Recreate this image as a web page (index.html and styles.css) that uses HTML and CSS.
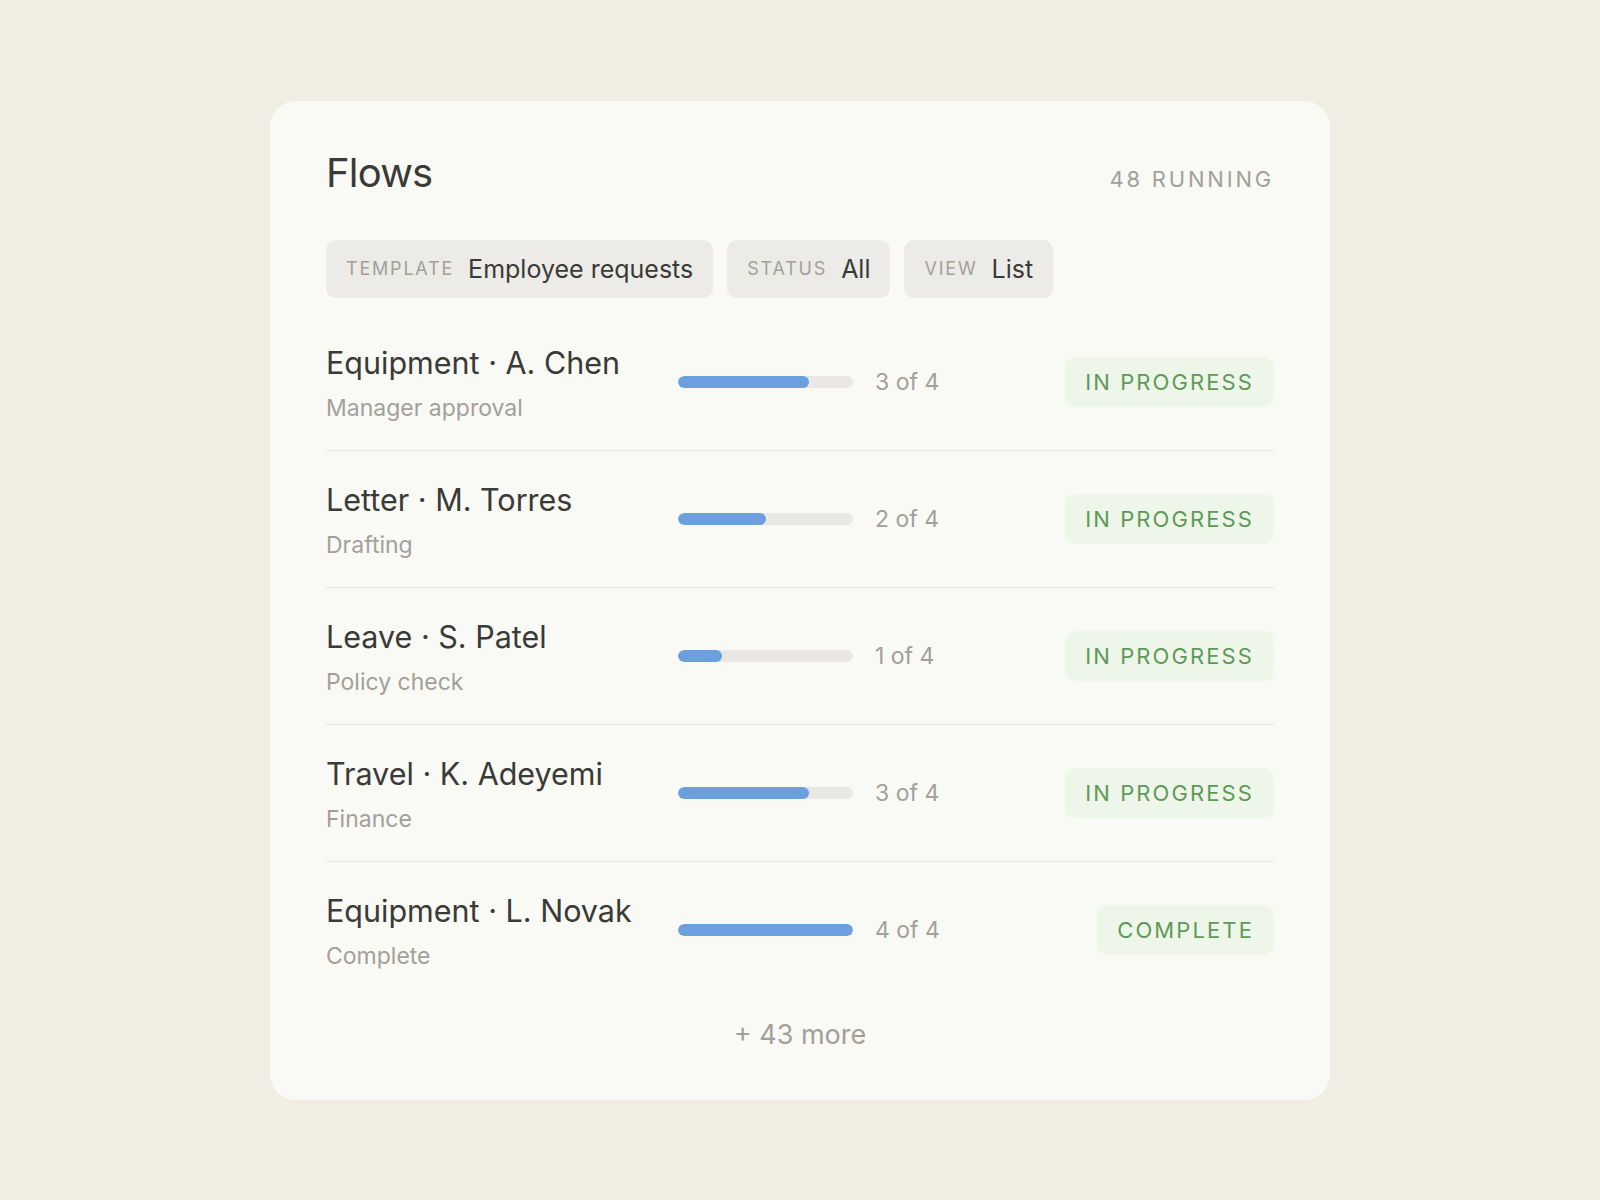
FILE: index.html
```html
<!DOCTYPE html>
<html lang="en">
<head>
    <meta charset="UTF-8">
    <meta name="viewport" content="width=device-width, initial-scale=1.0">
    <title>Flows</title>
    <link rel="stylesheet" href="styles.css">
</head>
<body>
    <div class="card">
        <div class="card-header">
            <h1>Flows</h1>
            <span class="running">48 running</span>
        </div>

        <div class="filters">
            <div class="chip"><span class="chip-label">Template</span><span class="chip-value">Employee requests</span></div>
            <div class="chip"><span class="chip-label">Status</span><span class="chip-value">All</span></div>
            <div class="chip"><span class="chip-label">View</span><span class="chip-value">List</span></div>
        </div>

        <div class="flow-list">
            <div class="flow">
                <div class="flow-info">
                    <div class="flow-title">Equipment · A. Chen</div>
                    <div class="flow-step">Manager approval</div>
                </div>
                <div class="progress"><div class="progress-fill" style="width: 75%"></div></div>
                <div class="progress-count">3 of 4</div>
                <div class="badge">In progress</div>
            </div>
            <div class="flow">
                <div class="flow-info">
                    <div class="flow-title">Letter · M. Torres</div>
                    <div class="flow-step">Drafting</div>
                </div>
                <div class="progress"><div class="progress-fill" style="width: 50%"></div></div>
                <div class="progress-count">2 of 4</div>
                <div class="badge">In progress</div>
            </div>
            <div class="flow">
                <div class="flow-info">
                    <div class="flow-title">Leave · S. Patel</div>
                    <div class="flow-step">Policy check</div>
                </div>
                <div class="progress"><div class="progress-fill" style="width: 25%"></div></div>
                <div class="progress-count">1 of 4</div>
                <div class="badge">In progress</div>
            </div>
            <div class="flow">
                <div class="flow-info">
                    <div class="flow-title">Travel · K. Adeyemi</div>
                    <div class="flow-step">Finance</div>
                </div>
                <div class="progress"><div class="progress-fill" style="width: 75%"></div></div>
                <div class="progress-count">3 of 4</div>
                <div class="badge">In progress</div>
            </div>
            <div class="flow">
                <div class="flow-info">
                    <div class="flow-title">Equipment · L. Novak</div>
                    <div class="flow-step">Complete</div>
                </div>
                <div class="progress"><div class="progress-fill" style="width: 100%"></div></div>
                <div class="progress-count">4 of 4</div>
                <div class="badge">Complete</div>
            </div>
        </div>

        <div class="more">+ 43 more</div>
    </div>
</body>
</html>
```

FILE: styles.css
```css
body {
    margin: 0;
    min-height: 100vh;
    display: flex;
    align-items: center;
    justify-content: center;
    background: #f1ede2;
    font-family: 'Inter', 'Liberation Sans', sans-serif;
    color: #3a3a36;
}

.card {
    width: 1060px;
    box-sizing: border-box;
    padding: 48px 56px;
    background: #f9f9f5;
    border-radius: 26px;
}

.card-header {
    display: flex;
    justify-content: space-between;
    align-items: baseline;
}

h1 {
    margin: 0;
    font-size: 40px;
    font-weight: 400;
    line-height: 48px;
    letter-spacing: -0.02em;
}

.running {
    font-size: 22px;
    letter-spacing: 2.8px;
    text-transform: uppercase;
    color: #a3a09a;
}

.filters {
    display: flex;
    gap: 14px;
    margin-top: 43px;
    margin-bottom: 16px;
}

.chip {
    display: flex;
    align-items: center;
    gap: 14px;
    height: 58px;
    box-sizing: border-box;
    padding: 0 20px;
    background: #ecebe7;
    border-radius: 10px;
}

.chip-label {
    font-size: 18px;
    letter-spacing: 1.8px;
    text-transform: uppercase;
    color: #a3a09a;
}

.chip-value {
    font-size: 25px;
    color: #3a3a36;
}

.flow {
    display: grid;
    grid-template-columns: 352px 175px 1fr auto;
    align-items: center;
    padding: 26px 0;
    border-bottom: 1px solid #e6e4df;
}

.flow:last-child {
    border-bottom: none;
}

.flow-info {
    padding-top: 3px;
}

.flow-title {
    font-size: 30.5px;
    line-height: 40px;
}

.flow-step {
    margin-top: 9px;
    font-size: 23px;
    line-height: 32px;
    color: #a3a09a;
}

.progress {
    height: 12px;
    border-radius: 6px;
    background: #e9e8e4;
    overflow: hidden;
}

.progress-fill {
    height: 100%;
    border-radius: 6px;
    background: #6b9fdd;
}

.progress-count {
    margin-left: 22px;
    font-size: 23px;
    color: #a3a09a;
}

.badge {
    padding: 12px 20px;
    font-size: 22px;
    line-height: 26px;
    letter-spacing: 2.1px;
    text-transform: uppercase;
    color: #5e9a56;
    background: #eef6ea;
    border-radius: 10px;
}

.more {
    margin-top: 20px;
    text-align: center;
    font-size: 27px;
    line-height: 34px;
    color: #a3a09a;
}
```
